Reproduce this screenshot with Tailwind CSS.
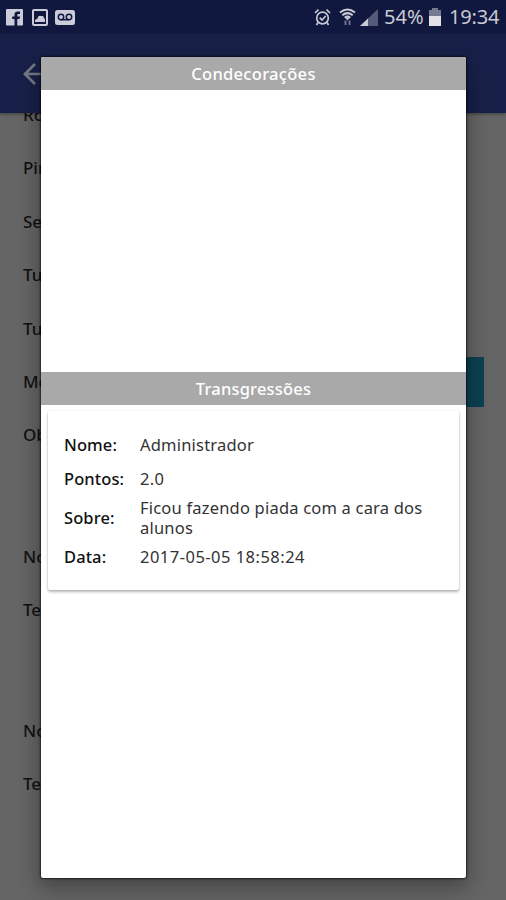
<!DOCTYPE html>
<html lang="pt-BR">
<head>
<meta charset="utf-8">
<title>Transgressões</title>
<script src="https://cdn.jsdelivr.net/npm/@tailwindcss/browser@4"></script>
</head>
<body class="relative h-[900px] w-[506px] overflow-hidden bg-[#656565] font-['Noto_Sans',sans-serif]">
  <!-- Page behind the dialog -->
  <div class="relative z-10 flex h-[113px] flex-col bg-[#182049] shadow-[0_1px_3px_rgba(0,0,0,0.4)]">
    <header class="flex h-[34px] items-center bg-[#10183f] px-[6px] text-[20px] text-[#c9cad3]">
      <svg class="h-[17px] w-[17px]" viewBox="0 0 17 17"><rect width="17" height="16.500" rx="1" fill="#cbcbd9"/><path d="M8.500 17V10H6.200V7.500H8.500V5.700Q8.500 2.500 11.700 2.500H14V5H12.300Q11.300 5 11.300 6V7.500H14L13.600 10H11.300V17Z" fill="#10183f"/></svg>
      <svg class="ml-[9px] h-[17px] w-[16px]" viewBox="0 0 16 17"><rect x="1" y="1" width="14" height="15" rx="1" fill="none" stroke="#cbcbd9" stroke-width="2"/><path d="M3 13V11L5.500 9.500L6.500 7H11L13 10.500V13Z" fill="#cbcbd9"/></svg>
      <svg class="ml-[7px] h-[15px] w-[20px]" viewBox="0 0 20 15"><rect width="20" height="15" rx="2.500" fill="#cbcbd9"/><g fill="none" stroke="#10183f" stroke-width="1.500"><circle cx="6" cy="7" r="2.700"/><circle cx="14" cy="7" r="2.700"/><path d="M6 9.700H14"/></g></svg>
      <svg class="ml-auto h-[19px] w-[17px]" viewBox="0 0 17 19" fill="none" stroke="#c9cad3" stroke-width="1.700"><circle cx="8.500" cy="10" r="5.800"/><path d="M1 5L4.500 1.700M16 5L12.500 1.700M4 14.500L2.500 17M13 14.500L14.500 17M5.700 9.700L8 12L11.700 8"/></svg>
      <svg class="ml-[8px] h-[18px] w-[17px]" viewBox="0 0 17 18" fill="none" stroke="#c9cad3" stroke-width="2"><path d="M1 4.500Q8.500-1.500 16 4.500M3.300 7.200Q8.500 3 13.700 7.200M5.700 9.700Q8.500 7.500 11.300 9.700"/><path d="M6.500 10H10.500L8.500 12.500Z" fill="#c9cad3" stroke="none"/><path d="M6.500 12.500V17M10.500 12.500V17" stroke="#777b93" stroke-width="1.800"/></svg>
      <svg class="ml-[4px] h-[17px] w-[18px]" viewBox="0 0 18 17"><path d="M0 17L18 0V17Z" fill="#555b78"/><path d="M0 17L8 9.500V17Z" fill="#c9cad3"/></svg>
      <span class="ml-[6px] w-[42px] whitespace-nowrap">54%</span>
      <svg class="ml-[3px] h-[18px] w-[12px]" viewBox="0 0 12 18"><path d="M3 0H9V2H12V18H0V2H3Z" fill="#777b90"/><path d="M0 8H12V18H0Z" fill="#e2e2e6"/></svg>
      <span class="-mr-[1px] ml-[8px] w-[52px] whitespace-nowrap tracking-[-0.2px]">19:34</span>
    </header>
    <div class="flex flex-1 items-center pl-[23px]">
      <svg class="h-[22px] w-[22px]" viewBox="0 0 22 22" fill="none" stroke="#77798a" stroke-width="2.700"><path d="M12 1L2 11L12 21M2 11H22"/></svg>
    </div>
  </div>

  <div class="-mt-[25px] flex flex-col pl-[23px] text-[17px] font-medium leading-[53.400px] text-[#111]">
    <div>Ro</div>
    <div>Pin</div>
    <div>Ser</div>
    <div>Tur</div>
    <div>Tur</div>
    <div class="flex items-center justify-between pr-[22px]"><span>Mé</span><span class="h-[50px] w-[100px] bg-[#0c4052]"></span></div>
    <div>Obs</div>
    <div class="mt-[68px]">No</div>
    <div>Tel</div>
    <div class="mt-[67px]">No</div>
    <div>Tel</div>
  </div>

  <!-- Dialog -->
  <main class="absolute left-[41px] top-[57px] z-20 flex h-[821px] w-[425px] flex-col overflow-hidden rounded-[2px] bg-white shadow-[0_0_2px_1px_rgba(0,0,0,0.6),0_8px_22px_2px_rgba(0,0,0,0.32)]">
    <h2 class="h-[33px] bg-[#a9a9a9] text-center text-[16.500px] font-medium leading-[34px] tracking-[0.3px] text-white">Condecorações</h2>
    <section class="h-[282px]"></section>
    <h2 class="h-[33px] bg-[#a9a9a9] text-center text-[16.500px] font-medium leading-[34px] tracking-[0.2px] text-white">Transgressões</h2>
    <section class="mx-[7px] mt-[6px] grid h-[179px] grid-cols-[76px_1fr] grid-rows-[34px_34px_44px_34px] items-center rounded-[2px] bg-white pl-[16px] pt-[17px] text-[16.500px] leading-[20px] text-[#333] shadow-[0_2px_3px_rgba(0,0,0,0.28),0_0_2px_rgba(0,0,0,0.12)]">
      <span class="font-medium tracking-[0.1px] text-[#111]">Nome:</span><span class="tracking-[0.2px]">Administrador</span>
      <span class="font-medium tracking-[0.1px] text-[#111]">Pontos:</span><span class="tracking-[0.3px]">2.0</span>
      <span class="font-medium tracking-[0.1px] text-[#111]">Sobre:</span><span class="tracking-[0.2px]">Ficou fazendo piada com a cara dos<br>alunos</span>
      <span class="font-medium tracking-[0.1px] text-[#111]">Data:</span><span class="tracking-[0.480px]">2017-05-05 18:58:24</span>
    </section>
  </main>
</body>
</html>
